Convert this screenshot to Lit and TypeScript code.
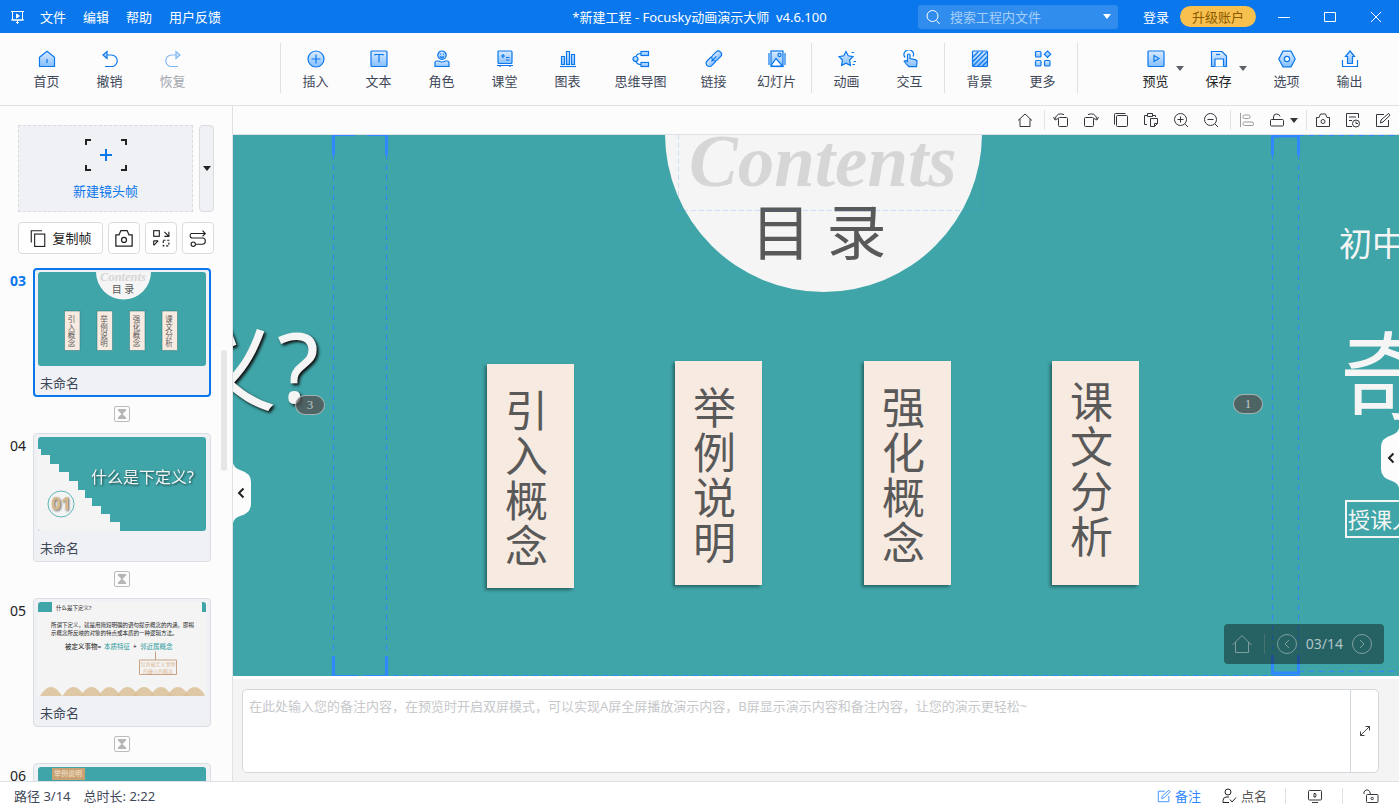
import { LitElement, html, css, svg, nothing } from "lit";
import type { TemplateResult, SVGTemplateResult } from "lit";
import { customElement, state } from "lit/decorators.js";
import { classMap } from "lit/directives/class-map.js";

type Glyph = SVGTemplateResult;

const toolGlyphs: Record<string, Glyph> = {
  home: svg`<path class="f" d="M1.5 7.2 9 1.2l7.500 6V16.500h-15z"/><path d="M9 9v4"/>`,
  undo: svg`<path d="M3 5h7.500a5.700 5.700 0 0 1 0 11.500H4"/><path class="f" d="M6 1.500v7L2 5z"/>`,
  redo: svg`<path d="M15 5H7.500a5.700 5.700 0 0 0 0 11.500H14"/><path class="f" d="M12 1.500v7L16 5z"/>`,
  insert: svg`<circle class="f" cx="9" cy="9" r="8"/><path d="M9 4.500v9M4.500 9h9"/>`,
  text: svg`<rect class="f" x="1" y="1" width="16" height="15.500" rx="1"/><path d="M5 5.500v-1h8v1M9 4.500v8"/>`,
  role: svg`<circle class="f" cx="9" cy="5.200" r="4.200"/><path class="f" d="M2 16.500v-3.500q0-2 2-2h1.500q3.500 2 7 0H14q2 0 2 2v3.500z"/><path d="M7.500 3.500v1M10.500 3.500v1M7 6.500q2 1.600 4 0"/>`,
  course: svg`<rect class="f" x="2" y="1" width="14" height="12.500" rx="1"/><path d="M1 15.500h16M4 15.500v1.500M14 15.500v1.500M5 6h4M7 4v4M10 7.500h3.500M10 10h3.500"/>`,
  chart: svg`<path class="f" d="M2.500 6.500h3v8h-3zM7.500 1.500h3v13h-3zM12.500 4.500h3v10h-3z"/><path d="M1 16.500h16"/>`,
  mind: svg`<circle class="f" cx="3.500" cy="9" r="2.500"/><rect class="f" x="9" y="1.500" width="7.500" height="4"/><rect class="f" x="9" y="12.500" width="7.500" height="4"/><path d="M4 6.500q1-3 5-3M4 11.500q1 3 5 3"/>`,
  link: svg`<g transform="rotate(-45 9 9)"><rect class="f" x="-.500" y="5.500" width="11" height="6.500" rx="3.200"/><rect class="f" x="7.500" y="5.500" width="11" height="6.500" rx="3.200"/><path d="M5.500 8.800h7"/></g>`,
  slides: svg`<rect class="f" x="3" y="1" width="12" height="15.500"/><path d="M1 3v12M17 3v12"/><path class="w" d="M3.500 15 8 8.500l6.500 7.500H3.500z"/><circle cx="11.500" cy="5" r="1.600"/>`,
  anim: svg`<path class="f" d="m8 1.500 2.200 4.300 4.800.800-3.400 3.400.800 5.500L8 13.200l-4.400 2.300.800-5.500L1 6.600l4.800-.800z"/><path d="M13.500 2.500H16M15.500 11.500H18M14.500 14.500H17"/>`,
  interact: svg`<path d="M4.200 7.500a4.700 4.700 0 1 1 7.800-1"/><path class="f" d="M6.500 11.500V4.800q1.300-1.600 2.500 0V8.500l5 1.200q2.200.500 2 2.500l-.500 4.500H8q-3-2.700-4.800-5.500 1.300-1.200 3.300.300z"/>`,
  bg: svg`<rect class="f" x="1.500" y="1" width="15" height="15.500" rx="1"/><path d="M2 7l5.500-5.500M2 11.500l10-10M2 16l14-14M6.500 16.500 16.500 6.500M11 16.500l5.500-5.500"/>`,
  more: svg`<rect class="f" x="1.500" y="1.500" width="5.500" height="5.500" rx="1"/><path class="f" d="m13.500 1 3.200 3.200-3.200 3.200-3.200-3.200z"/><rect class="f" x="1.500" y="10.500" width="5.500" height="5.500" rx="1"/><rect class="f" x="10.500" y="10.500" width="5.500" height="5.500" rx="1"/>`,
  preview: svg`<rect class="f" x="1" y="1" width="16" height="15.500" rx="1"/><path d="M7 5.500v6L12 8.500z"/>`,
  save: svg`<path class="f" d="M1.500 1.500H12l4.500 4.500v10.500h-15z"/><path class="w" d="M5 16.500V9h8.500v7.500"/><path d="M6 4.500h4"/>`,
  options: svg`<path class="f" d="M5 1.200h8L17.200 9 13 16.800H5L.8 9z"/><circle class="w" cx="9" cy="9" r="2.600"/>`,
  output: svg`<path class="f" d="M6.500 13.500V6.500H4.500L9 1l4.500 5.500h-2v7z"/><path d="M1.500 10v6.500h15V10"/>`,
};

const lineGlyphs: Record<string, Glyph> = {
  house: svg`<path d="M1 8.500 8 2l7 6.500M3 7v7.500h10V7"/>`,
  rotL: svg`<rect x="5.500" y="5.500" width="9" height="9" rx="1"/><path d="M11 2.500Q4 0 2 7M.500 5 2 8l3-1.500"/>`,
  rotR: svg`<rect x="1.500" y="5.500" width="9" height="9" rx="1"/><path d="M5 2.500Q12 0 14 7M15.500 5 14 8l-3-1.500"/>`,
  copy: svg`<rect x="3.500" y="3.500" width="11" height="11" rx="1"/><path d="M1.500 12.500V2.500q0-1 1-1h10"/>`,
  paste: svg`<path d="M4 12.500H1.500v-9H4M10 3.500h2.500V5M4.500 4.500v-3h5v3z"/><path d="M7.500 6.500h7v5l-3 3h-4zM14.500 11.500h-3v3"/>`,
  zoomIn: svg`<circle cx="7.500" cy="7.500" r="6"/><path d="m12 12 3 3M4.500 7.500h6M7.500 4.500v6"/>`,
  zoomOut: svg`<circle cx="7.500" cy="7.500" r="6"/><path d="m12 12 3 3M4.500 7.500h6"/>`,
  align: svg`<path d="M1.500 1v14"/><rect x="4" y="3" width="7" height="3.500" rx="1.500"/><rect x="4" y="10" width="10.500" height="3.500" rx="1.500"/>`,
  unlock: svg`<rect x="1.500" y="7.500" width="13" height="6.500" rx="1"/><path d="M4.500 7.500V5q0-3 3-3t3.500 2.500"/>`,
  camera: svg`<path d="M1.500 5.500h2.500L5.500 2h5L12 5.500h2.500v9h-13z"/><circle cx="8" cy="9.500" r="2"/>`,
  history: svg`<path d="M7 14.500H1.500v-13h12V6M4 5h7M4 8.500h3"/><circle cx="11" cy="11.500" r="3.500"/><path d="M11 9.500v2h2"/>`,
  edit: svg`<path d="M9 2.500H1.500v12h12V8"/><path d="m5.500 11 .5-3 7.500-6.500 1.500 1.700-7 6.800z"/>`,
  swap: svg`<rect x="1.500" y="1.500" width="5" height="5"/><path d="M11 2.500l4 4M15 2.500v4h-4M1.500 10.500h4M1.500 10.500v4M5.500 10.500l-4 4"/><path stroke-dasharray="2 1.500" d="M10 10h5v5h-5z"/>`,
  route: svg`<path d="M2 4h12.500M12 1.500 14.500 4 12 6.500M2 4Q1 4 1 6t2 2h9q2.500 0 2.500 2.700T12 13.500H6"/><circle cx="3.800" cy="13.500" r="1.900"/>`,
  dup: svg`<rect x="5" y="4.500" width="9" height="11"/><path d="M2 12V1.500h9.500"/>`,
  person: svg`<circle cx="7" cy="4" r="3"/><path d="M8 14.500H2v-2Q2 9.500 5 9h3M9 11.500l2 2.500 4-4.500"/>`,
  screen: svg`<rect x="1.500" y="2.500" width="13" height="9.500" rx="1"/><path d="M5 14.500h6M7 5.500v3.500h1.500q1-1.700 0-3.500z"/>`,
  openLock: svg`<rect x="3.500" y="6.500" width="11.500" height="8" rx="1"/><path d="M1 6V4q1.500-3 4-2 2 .700 2.500 4.500"/><circle cx="9.200" cy="10.500" r="1.200"/>`,
  expand: svg`<path d="m3.500 12.500 9-9M8.500 3.500h4v4M3.500 8.500v4h4"/>`,
  search: svg`<circle cx="7.500" cy="7" r="5.500"/><path d="m11.500 11.500 3 3.500"/>`,
};

const line = (name: string, size = 16) => html`
  <svg class="line" width=${size} height=${size} viewBox="0 0 16 16" aria-hidden="true">${lineGlyphs[name]}</svg>`;

interface Tool { id: string; label: string; kind?: string; menu?: boolean }

const historyTools: Tool[] = [
  { id: "home", label: "首页" },
  { id: "undo", label: "撤销" },
  { id: "redo", label: "恢复", kind: "off" },
];
const insertTools: Tool[] = [
  { id: "insert", label: "插入" },
  { id: "text", label: "文本" },
  { id: "role", label: "角色" },
  { id: "course", label: "课堂" },
  { id: "chart", label: "图表" },
  { id: "mind", label: "思维导图", kind: "wide" },
  { id: "link", label: "链接" },
  { id: "slides", label: "幻灯片" },
];
const motionTools: Tool[] = [
  { id: "anim", label: "动画" },
  { id: "interact", label: "交互" },
];
const sceneTools: Tool[] = [
  { id: "bg", label: "背景" },
  { id: "more", label: "更多" },
];
const outputTools: Tool[] = [
  { id: "preview", label: "预览", kind: "dark", menu: true },
  { id: "save", label: "保存", kind: "dark", menu: true },
  { id: "options", label: "选项", kind: "apart" },
  { id: "output", label: "输出" },
];

const columns = ["引入概念", "举例说明", "强化概念", "课文分析"];

const thumbs: Record<string, TemplateResult> = {
  "03": html`<svg class="thumb" viewBox="0 0 336 188">
    <rect width="336" height="188" fill="#3fa5a8"/>
    <circle cx="171" cy="0" r="55" fill="#f5f5f5"/>
    <text class="serif" x="170" y="18" text-anchor="middle" font-size="25" fill="#d6d6d6">Contents</text>
    <text x="170" y="42" text-anchor="middle" font-size="20" fill="#595959">目 录</text>
    ${columns.map((word, i) => svg`
      <rect x=${53 + i * 65} y="78" width="31" height="79" fill="#f7eae0" stroke="#2c7375"/>
      ${[...word].map((ch, n) => svg`<text x=${67 + i * 65} y=${100 + n * 16} text-anchor="middle" font-size="15" fill="#595959">${ch}</text>`)}`)}
  </svg>`,
  "04": html`<svg class="thumb" viewBox="0 0 168 94">
    <rect width="168" height="94" fill="#3fa5a8"/>
    <path fill="#f4f4f4" d="M0 12h3v6h9v9h9v8h10v9h9v9h7v8h7v8h9v8h9v8h10v9H0z"/>
    <text class="cast" x="53" y="46" font-size="16" fill="#f5f5f5">什么是下定义?</text>
    <circle cx="23" cy="67" r="13" fill="none" stroke="#5db5b7" stroke-width="1"/>
    <text class="cast" x="23" y="73" text-anchor="middle" font-size="17" font-weight="700" fill="#d8b98c">01</text>
  </svg>`,
  "05": html`<svg class="thumb" viewBox="0 0 336 188">
    <rect width="336" height="188" fill="#f4f4f4"/>
    <path fill="#3fa5a8" d="M0 0h28v20H0zM328 0h8v20h-8z"/>
    <g fill="#222" font-size="11">
      <text x="36" y="16">什么是下定义?</text>
      <text x="26" y="49">所谓下定义，就是用简短明确的语句提示概念的内涵，即揭</text>
      <text x="26" y="66">示概念所反映的对象的特点或本质的一种逻辑方法。</text>
    </g>
    <g fill="#111" font-size="13">
      <text x="54" y="94">被定义事物=</text><text x="190" y="94">+</text>
      <text x="132" y="94" fill="#279a9d">本质特征</text><text x="204" y="94" fill="#279a9d">邻近属概念</text>
    </g>
    <path d="M235 99v17M203 116h74v29h-74z" fill="none" stroke="#c9a283" stroke-width="2"/>
    <g font-size="10" fill="#dcb892" text-anchor="middle">
      <text x="240" y="127">包含被定义事物</text><text x="240" y="142">的最小的概念</text>
    </g>
    ${[26, 71, 107, 143, 179, 212, 246, 280, 313].map((x) => svg`<path fill="#d9bf97" fill-opacity=".85" d="M${x - 22} 188q22-36 44 0z"/>`)}
  </svg>`,
  "06": html`<svg class="thumb" viewBox="0 0 168 94">
    <rect width="168" height="94" fill="#3fa5a8"/>
    <rect x="14" y="1" width="33" height="12" fill="#c8a275"/>
    <text x="30" y="9" text-anchor="middle" font-size="7" fill="#f5e6d3">举例说明</text>
  </svg>`,
};

@customElement("app-root")
export class AppRoot extends LitElement {
  @state() private current = "03";

  static styles = css`
    :host {
      display: flex;
      flex-direction: column;
      height: 100vh;
      overflow: hidden;
      background: #fcfcfc;
      color: #3f4859;
      font: 13px/20px "Noto Sans", "Noto Sans CJK SC", sans-serif;
    }
    * { box-sizing: border-box; }
    button, input, textarea { font: inherit; color: inherit; }
    button { margin: 0; padding: 0; border: 0; background: none; }
    svg { display: block; flex: none; }
    .defs { position: absolute; width: 0; height: 0; }
    .line { fill: none; stroke: currentColor; stroke-width: 1; }
    .caret { width: 0; height: 0; border: 4px solid transparent; border-top: 5px solid currentColor; border-bottom: 0; }

    .titlebar {
      flex: none;
      display: grid;
      grid-template-columns: 1fr auto 1fr;
      align-items: center;
      height: 33px;
      background: #0a77ed;
      color: #fff;
    }
    .menus { display: flex; align-items: center; gap: 17px; padding-left: 10px; }
    .menus .line { margin-right: -3px; }
    .title { margin: 0; font-size: 13px; font-weight: 400; white-space: pre; }
    .account { display: flex; align-items: center; justify-content: flex-end; }
    .search {
      display: flex;
      align-items: center;
      gap: 9px;
      width: 200px;
      height: 24px;
      margin-right: 25px;
      padding: 0 7px;
      border-radius: 3px;
      background: #308dee;
    }
    .search input { flex: 1; min-width: 0; padding: 0; border: 0; outline: 0; background: none; }
    .search input::placeholder { color: #a6cff8; opacity: 1; }
    .login { color: #fff; text-decoration: none; }
    .upgrade { width: 76px; height: 21px; margin: 0 5px 0 11px; border-radius: 11px; background: #f8c04e; color: #8a5a00; }
    .win { display: grid; place-items: center; width: 46px; height: 33px; }

    .toolbar { flex: none; display: flex; height: 73px; padding: 0 18px 0 15px; border-bottom: 1px solid #dfe1e4; }
    .group { display: flex; }
    .first { margin-right: 73px; }
    .last { margin-left: auto; }
    .rule { width: 1px; height: 50px; margin: 10px 3px 0; background: #dfe1e4; }
    .tool {
      position: relative;
      display: flex;
      flex-direction: column;
      align-items: center;
      gap: 3px;
      width: 63px;
      padding-top: 17px;
    }
    .tool svg { stroke: #0a77ed; fill: none; stroke-width: 1.2; }
    .tool .f { fill: url(#sky); }
    .tool .w { fill: #fff; }
    .wide { width: 83px; }
    .off svg { opacity: .5; }
    .off { color: #a3a7ae; }
    .dark { color: #1c1f24; }
    .apart { margin-left: 5px; }
    .tool .caret { position: absolute; right: 3px; top: 33px; color: #5c6068; }

    .body { flex: 1; min-height: 0; display: flex; }
    .side {
      position: relative;
      flex: none;
      display: flex;
      flex-direction: column;
      width: 233px;
      padding-top: 19px;
      border-right: 1px solid #dfe1e4;
    }
    .create { flex: none; display: flex; gap: 6px; height: 87px; padding: 0 18px; }
    .newframe {
      display: flex;
      flex-direction: column;
      align-items: center;
      justify-content: center;
      gap: 10px;
      width: 175px;
      padding-top: 3px;
      border: 1px dashed #d9dbdf;
      background: #f0f1f4;
      color: #0a77ed;
    }
    .newmenu { display: grid; place-items: center; width: 15px; border: 1px solid #dadce0; border-radius: 4px; background: #f0f1f4; color: #222; }
    .actions { flex: none; display: flex; gap: 5px; height: 32px; margin-top: 10px; padding-left: 18px; color: #222; }
    .action { display: grid; place-items: center; width: 32px; border: 1px solid #dadce0; border-radius: 4px; background: #fff; }
    .duplicate { display: flex; align-items: center; justify-content: center; gap: 5px; width: 85px; }
    .frames { flex: 1; min-height: 0; overflow: hidden; margin: 14px 0 0; padding: 0; list-style: none; }
    .frame { display: grid; grid-template-columns: 23px 178px; justify-content: start; padding-left: 10px; }
    .num { padding-top: 3px; font-size: 14px; color: #222; }
    .card {
      display: flex;
      flex-direction: column;
      align-items: flex-start;
      gap: 7px;
      height: 129px;
      padding: 3px 4px;
      border: 1px solid #dadde1;
      border-radius: 4px;
      background: #f0f1f4;
    }
    .on .card { padding: 2px 3px; border: 2px solid #0a77ed; }
    .on .num { font-weight: 700; color: #0a77ed; }
    .caption { padding-left: 2px; }
    .thumb { width: 168px; height: 94px; border-radius: 3px; }
    .serif { font-family: "Liberation Serif", serif; font-style: italic; font-weight: 700; }
    .cast { filter: drop-shadow(1px 1px 1px rgba(0, 0, 0, .6)); }
    .wait { display: grid; place-items: center; grid-column: 2; justify-self: center; width: 16px; height: 16px; margin: 9px 0 11px; border: 1px solid #bcbcbc; border-radius: 2px; }
    .scroll { position: absolute; right: 5px; top: 244px; width: 6px; height: 121px; border-radius: 3px; background: #e6e6e6; }

    .main { flex: 1; min-width: 0; display: flex; flex-direction: column; }
    .subbar { flex: none; display: flex; align-items: center; justify-content: flex-end; height: 29px; padding-right: 1px; border-bottom: 1px solid #dfe1e4; color: #33363b; }
    .mini { display: grid; place-items: center; width: 30px; height: 28px; }
    .mini.faint { color: #989a9e; }
    .mini.arrow { width: 10px; margin-left: -3px; margin-right: 3px; }
    .sep { width: 1px; height: 20px; margin: 0 1px 0 4px; background: #e2e3e5; }

    .stage { position: relative; flex: 1; min-height: 0; overflow: hidden; background: #3fa5a8; color: #f5f5f5; }
    .disc { position: absolute; left: 432px; top: -160px; width: 317px; height: 317px; border-radius: 50%; background: #f5f5f5; }
    .contents { position: absolute; left: 456px; top: -13px; font-size: 73px; line-height: 80px; color: #d6d6d6; }
    .heading { position: absolute; left: 518px; top: 57px; margin: 0; font-size: 60px; line-height: 80px; font-weight: 400; color: #595959; }
    .big { position: absolute; white-space: nowrap; font-size: 97px; line-height: 100px; }
    .lead { left: -53px; top: 180px; text-shadow: 2px 2px 3px #111; }
    .odd { left: 1107px; top: 190px; font-size: 95px; }
    .grade { position: absolute; left: 1106px; top: 89px; font-size: 33px; line-height: 40px; white-space: nowrap; }
    .teacher { position: absolute; left: 1112px; top: 365px; padding: 0 1px; border: 2px solid #f5f5f5; font-size: 22px; line-height: 34px; white-space: nowrap; }
    .slip {
      position: absolute;
      display: flex;
      width: 87px;
      height: 224px;
      padding: 24px 0 0 18px;
      background: #f7eae0;
      box-shadow: -2px 2px 3px rgba(0, 0, 0, .4);
      color: #595959;
      font-size: 43px;
      line-height: 45px;
    }
    .slip span { width: 43px; }
    .s0 { left: 254px; top: 229px; }
    .s1 { left: 442px; top: 226px; }
    .s2 { left: 631px; top: 226px; }
    .s3 { left: 819px; top: 226px; padding-top: 18px; }
    .guides { position: absolute; left: 0; top: 0; fill: none; stroke: #2f88ff; }
    .badge {
      position: absolute;
      width: 30px;
      height: 20px;
      border: 1px solid rgba(255, 255, 255, .5);
      border-radius: 10px;
      background: rgba(83, 83, 83, .8);
      color: #bcc8c8;
      font: 13px/18px "Liberation Serif", serif;
      text-align: center;
    }
    .b3 { left: 62px; top: 260px; }
    .b1 { left: 1000px; top: 259px; }
    .pager {
      position: absolute;
      right: 15px;
      bottom: 12px;
      display: flex;
      align-items: center;
      justify-content: flex-end;
      gap: 9px;
      width: 160px;
      height: 40px;
      padding: 0 12px 0 7px;
      border-radius: 4px;
      background: rgba(8, 16, 18, .45);
      color: #7fa09f;
      font-size: 14px;
    }
    .pager span { color: #b0c4c4; }
    .pager i { width: 1px; height: 20px; margin: 0 3px; background: #447372; }
    .handle { position: absolute; z-index: 1; width: 18px; height: 60px; }
    .handle.left { left: 0; top: 328px; }
    .handle.right { right: 0; top: 293px; }

    .notes { flex: none; display: flex; padding: 13px 20px 8px 9px; background: #f4f4f4; box-shadow: inset 0 3px #fff; }
    .notebox { flex: 1; display: flex; height: 84px; border: 1px solid #d3d7de; border-radius: 5px; background: #fff; }
    .notebox textarea { flex: 1; min-width: 0; padding: 6px; border: 0; outline: 0; resize: none; background: none; }
    .notebox textarea::placeholder { color: #c6c8cb; opacity: 1; }
    .grow { display: grid; place-items: center; width: 28px; border-left: 1px solid #d3d7de; color: #444; }

    .status { flex: none; display: flex; align-items: center; gap: 13px; height: 26px; padding: 3px 20px 0 14px; border-top: 1px solid #dfe1e4; background: #fff; }
    .status .end { display: flex; align-items: center; margin-left: auto; color: #33363b; }
    .end button { display: flex; align-items: center; gap: 4px; }
    .end .note { color: #2f88ff; }
    .end .roll { margin-left: 20px; margin-right: 18px; color: #555; }
    .end .roll .line { color: #222; }
    .end i { width: 1px; height: 16px; background: #dfe1e4; }
    .end .mid { margin: 0 19px 0 21px; }
    .end .lock { margin-left: 20px; }
  `;

  private tools(list: Tool[]) {
    return list.map((t) => html`
      <button class=${"tool " + (t.kind ?? "")} ?disabled=${t.kind === "off"}>
        <svg width="18" height="18" viewBox="0 0 18 18" aria-hidden="true">${toolGlyphs[t.id]}</svg>
        <span>${t.label}</span>
        ${t.menu ? html`<span class="caret"></span>` : nothing}
      </button>`);
  }

  private mini(name: string, label: string, extra = "") {
    return html`<button class=${"mini " + extra} aria-label=${label}>${line(name)}</button>`;
  }

  private frame(id: string) {
    return html`
      <li class=${classMap({ frame: true, on: this.current === id })}>
        <span class="num">${id}</span>
        <button class="card" @click=${() => { this.current = id; }}>
          ${thumbs[id]}
          <span class="caption">未命名</span>
        </button>
        <button class="wait" aria-label="停留时间">
          <svg width="8" height="10" viewBox="0 0 8 10" fill="#b5b5b5"><path d="M0 0h8v1.500L4.500 5 8 8.500V10H0V8.500L3.500 5 0 1.500z"/></svg>
        </button>
      </li>`;
  }

  render() {
    return html`
      <svg class="defs" aria-hidden="true"><defs><linearGradient id="sky" x1="0" y1="0" x2="0" y2="1">
        <stop offset="0" stop-color="#dcebff"/><stop offset="1" stop-color="#86bffc"/>
      </linearGradient></defs></svg>

      <header class="titlebar">
        <nav class="menus">
          <svg class="line" width="16" height="16" viewBox="0 0 16 16"><path d="M1 2.500h13M2.500 2.500v8.500h10V2.500M1 11h13M7.500 11v3.500M6 13l1.500 1.500L9 13"/><path fill="#fff" d="M6.500 5v4L9.500 7z"/></svg>
          <button>文件</button><button>编辑</button><button>帮助</button><button>用户反馈</button>
        </nav>
        <h1 class="title">*新建工程 - Focusky动画演示大师  v4.6.100</h1>
        <div class="account">
          <label class="search">${line("search")}
            <input type="text" placeholder="搜索工程内文件" aria-label="搜索工程内文件">
            <span class="caret"></span>
          </label>
          <a class="login" href="#">登录</a>
          <button class="upgrade">升级账户</button>
          <button class="win" aria-label="最小化"><svg class="line" width="12" height="12"><path d="M0 6.500h12"/></svg></button>
          <button class="win" aria-label="最大化"><svg class="line" width="12" height="12"><path d="M.5 1.500h11v9H.5z"/></svg></button>
          <button class="win" aria-label="关闭"><svg class="line" width="12" height="12"><path d="m1 1 10 10M11 1 1 11"/></svg></button>
        </div>
      </header>

      <div class="toolbar" role="toolbar">
        <div class="group first">${this.tools(historyTools)}</div>
        <div class="rule"></div>
        <div class="group">${this.tools(insertTools)}</div>
        <div class="rule"></div>
        <div class="group">${this.tools(motionTools)}</div>
        <div class="rule"></div>
        <div class="group">${this.tools(sceneTools)}</div>
        <div class="rule"></div>
        <div class="group last">${this.tools(outputTools)}</div>
      </div>

      <div class="body">
        <aside class="side">
          <div class="create">
            <button class="newframe">
              <svg width="42" height="32" viewBox="0 0 42 32" fill="none" stroke="#222" stroke-width="2">
                <path d="M1 6V1h5M36 1h5v5M41 26v5h-5M6 31H1v-5"/><path stroke="#0a77ed" d="M15 16h12M21 10v12"/>
              </svg>
              <span>新建镜头帧</span>
            </button>
            <button class="newmenu" aria-label="更多镜头帧"><span class="caret"></span></button>
          </div>
          <div class="actions">
            <button class="action duplicate">${line("dup", 18)}<span>复制帧</span></button>
            <button class="action" aria-label="截图">${line("camera", 20)}</button>
            <button class="action" aria-label="替换">${line("swap", 18)}</button>
            <button class="action" aria-label="路径">${line("route", 18)}</button>
          </div>
          <ul class="frames">${["03", "04", "05", "06"].map((id) => this.frame(id))}</ul>
          <div class="scroll"></div>
        </aside>

        <main class="main">
          <div class="subbar" role="toolbar">
            ${this.mini("house", "主页")}<div class="sep"></div>
            ${this.mini("rotL", "左转")}${this.mini("rotR", "右转")}${this.mini("copy", "复制")}
            ${this.mini("paste", "粘贴")}${this.mini("zoomIn", "放大")}${this.mini("zoomOut", "缩小")}
            <div class="sep"></div>
            ${this.mini("align", "对齐", "faint")}${this.mini("unlock", "解锁")}
            <button class="mini arrow" aria-label="锁定选项"><span class="caret"></span></button>
            <div class="sep"></div>
            ${this.mini("camera", "截图")}${this.mini("history", "历史")}${this.mini("edit", "编辑")}
          </div>

          <section class="stage">
            <div class="disc"></div>
            <div class="contents serif">Contents</div>
            <h2 class="heading">目 录</h2>
            <div class="big lead">义?</div>
            <div class="grade">初中</div>
            <div class="big odd">奇</div>
            <div class="teacher">授课人</div>
            ${columns.map((word, i) => html`<div class="slip s${i}"><span>${word}</span></div>`)}
            <svg class="guides" width="1166" height="541" viewBox="0 0 1166 541">
              <path stroke-dasharray="5 5" d="M100.500 20v500M153.500 20v500M1039.500 20v500M1065.500 20v500M1066 .5h100M1066 536.500h100M100 540.500h966"/>
              <path stroke-width="3" d="M100.500 0v20M153.500 0v20M100.500 521v20M153.500 521v20M1039.500 20V1h26v19M1039.500 520v18h26v-18"/>
              <path d="M102 .5h20M134 .5h18M102 540.500h20M134 540.500h18M1040 540.500h26"/>
              <path stroke-dasharray="5 3" opacity=".2" d="M445.500 0v75.500H750V0"/>
            </svg>
            <span class="badge b3">3</span>
            <span class="badge b1">1</span>
            <button class="handle left" aria-label="收起左侧栏">
              <svg width="18" height="60" viewBox="0 0 18 60"><path fill="#fcfcfc" d="M0 0q1 5 7 7 11 3 11 12v22q0 9-11 12-6 2-7 7z"/><path fill="none" stroke="#222" stroke-width="2" d="m10.500 25.500-4.500 4.500 4.500 4.500"/></svg>
            </button>
            <button class="handle right" aria-label="展开右侧栏">
              <svg width="18" height="60" viewBox="0 0 18 60"><path fill="#fcfcfc" d="M18 0q-1 5-7 7Q0 10 0 19v22q0 9 11 12 6 2 7 7z"/><path fill="none" stroke="#222" stroke-width="2" d="m12.500 25.500-4.500 4.500 4.500 4.500"/></svg>
            </button>
            <div class="pager">
              <button aria-label="首页"><svg class="line" width="20" height="20" viewBox="0 0 20 20"><path d="m.5 11 9.500-9.500 9.500 9.500M3.500 8v10.500h13V8"/></svg></button>
              <i></i>
              <button aria-label="上一帧"><svg class="line" width="20" height="20" viewBox="0 0 20 20"><circle cx="10" cy="10" r="9.500"/><path d="M12 6 8 10l4 4"/></svg></button>
              <span>03/14</span>
              <button aria-label="下一帧"><svg class="line" width="20" height="20" viewBox="0 0 20 20"><circle cx="10" cy="10" r="9.500"/><path d="m8 6 4 4-4 4"/></svg></button>
            </div>
          </section>

          <section class="notes">
            <div class="notebox">
              <textarea aria-label="备注" placeholder="在此处输入您的备注内容，在预览时开启双屏模式，可以实现A屏全屏播放演示内容，B屏显示演示内容和备注内容，让您的演示更轻松~"></textarea>
              <button class="grow" aria-label="展开备注">${line("expand")}</button>
            </div>
          </section>
        </main>
      </div>

      <footer class="status">
        <span>路径 3/14</span><span>总时长: 2:22</span>
        <div class="end">
          <button class="note">${line("edit", 14)}备注</button>
          <button class="roll">${line("person")}点名</button>
          <i></i>
          <button class="mid" aria-label="双屏">${line("screen")}</button>
          <i></i>
          <button class="lock" aria-label="锁定">${line("openLock")}</button>
        </div>
      </footer>
    `;
  }
}
